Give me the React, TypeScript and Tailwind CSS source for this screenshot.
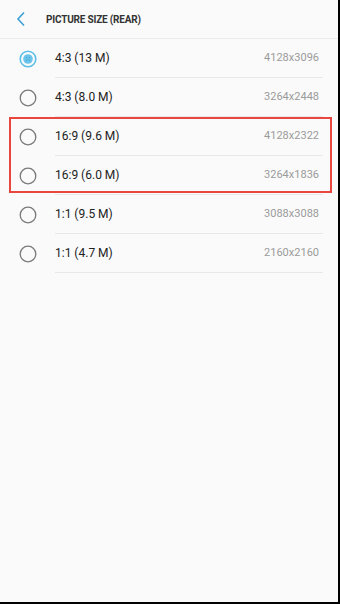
type SizeOption = {
  label: string;
  resolution: string;
};

const options: SizeOption[] = [
  { label: "4:3 (13 M)", resolution: "4128x3096" },
  { label: "4:3 (8.0 M)", resolution: "3264x2448" },
  { label: "16:9 (9.6 M)", resolution: "4128x2322" },
  { label: "16:9 (6.0 M)", resolution: "3264x1836" },
  { label: "1:1 (9.5 M)", resolution: "3088x3088" },
  { label: "1:1 (4.7 M)", resolution: "2160x2160" },
];

function Radio({ checked }: { checked: boolean }) {
  if (checked) {
    return (
      <svg width="18" height="18" viewBox="0 0 18 18">
        <circle cx="9" cy="9" r="7.8" fill="none" stroke="#5bbfe8" strokeWidth="1.6" />
        <circle cx="9" cy="9" r="4.8" fill="#6cc4ea" />
        <circle cx="7.5" cy="7.5" r="0.6" fill="#3f9fcc" />
        <circle cx="10.5" cy="7.5" r="0.6" fill="#3f9fcc" />
        <circle cx="9" cy="9" r="0.6" fill="#3f9fcc" />
        <circle cx="7.5" cy="10.5" r="0.6" fill="#3f9fcc" />
        <circle cx="10.5" cy="10.5" r="0.6" fill="#3f9fcc" />
      </svg>
    );
  }
  return (
    <svg width="18" height="18" viewBox="0 0 18 18">
      <circle cx="9" cy="9" r="7.8" fill="none" stroke="#7a7a7a" strokeWidth="1.3" />
    </svg>
  );
}

export default function App() {
  return (
    <div
      className="relative h-[604px] w-[340px] overflow-hidden border-r-2 border-b-2 border-black bg-[#fafafa]"
      style={{ fontFamily: "Roboto, 'Liberation Sans', sans-serif" }}
    >
      <header className="flex h-[39px] items-center border-b border-[#ebebeb]">
        <svg width="10" height="16" viewBox="0 0 10 16" className="ml-[16px]">
          <path d="M8 1.5 L2 8 L8 14.5" fill="none" stroke="#3c9fd6" strokeWidth="1.6" />
        </svg>
        <h1 className="ml-[20px] text-[10px] font-bold tracking-[-0.2px] text-[#333333]">
          PICTURE SIZE (REAR)
        </h1>
      </header>

      <ul>
        {options.map((option, index) => (
          <li key={option.label} className="flex h-[39px] items-stretch">
            <div className="flex w-[55px] items-center pl-[19px]">
              <Radio checked={index === 0} />
            </div>
            <div className="mr-[15px] flex flex-1 items-center justify-between border-b border-[#e8e8e8] pr-[4px]">
              <span className="text-[12px] text-[#222222]">{option.label}</span>
              <span className="text-[11px] text-[#9b9b9b]">{option.resolution}</span>
            </div>
          </li>
        ))}
      </ul>

      <div className="pointer-events-none absolute top-[117px] left-[9px] h-[76px] w-[323px] border-2 border-[#e8463f]" />
    </div>
  );
}
